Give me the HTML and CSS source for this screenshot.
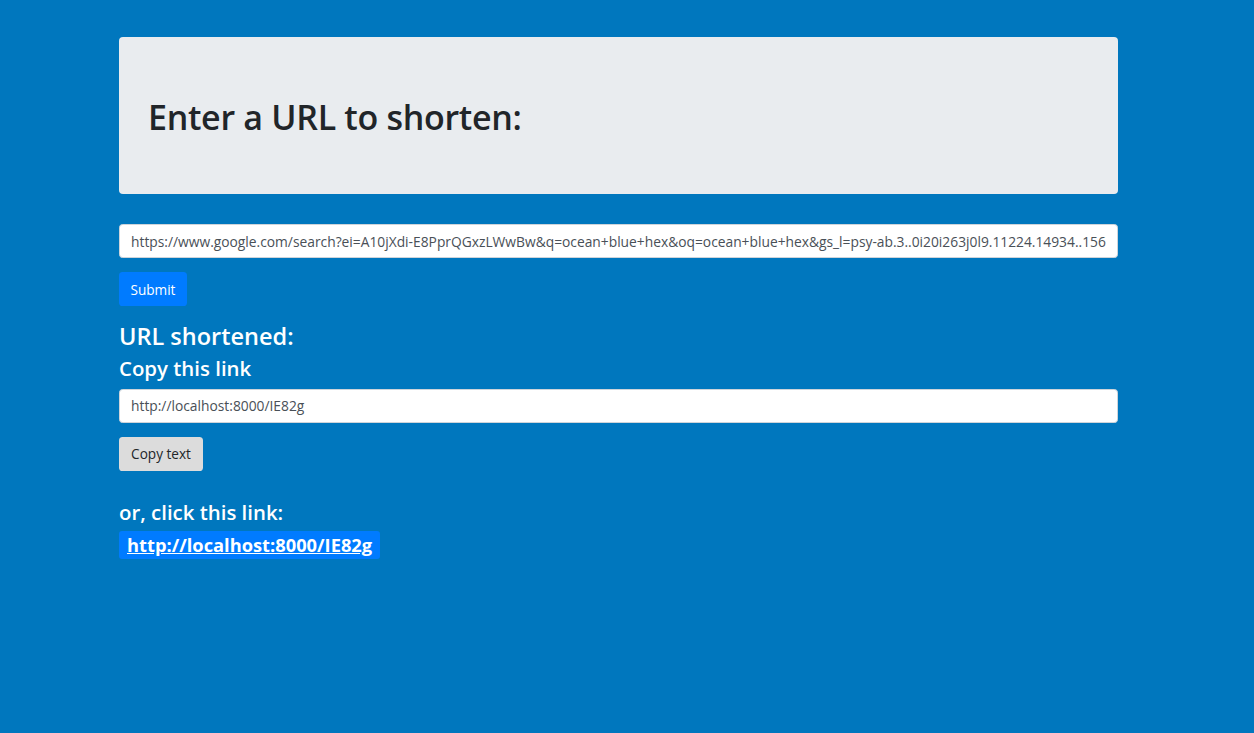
FILE: index.html
```html
<!DOCTYPE html>
<html>
<head>
<meta charset="utf-8">
<link rel="stylesheet" href="styles.css">
</head>
<body>
<main class="container">
  <section class="jumbotron">
    <h1 class="title">Enter a URL to shorten:</h1>
  </section>
  <form class="form">
    <div class="form-group">
      <input class="form-control" type="text" value="https://www.google.com/search?ei=A10jXdi-E8PprQGxzLWwBw&amp;q=ocean+blue+hex&amp;oq=ocean+blue+hex&amp;gs_l=psy-ab.3..0i20i263j0l9.11224.14934..15676...0.0..0.112.1243.13j1......0....1..gws-wiz.......0i71j0i131j0i67j0i10.abcdef">
    </div>
    <button class="btn btn-primary" type="button">Submit</button>
  </form>
  <section class="result">
    <h3 class="h3">URL shortened:</h3>
    <h4 class="h4">Copy this link</h4>
    <div class="form-group">
      <input class="form-control" type="text" value="http://localhost:8000/IE82g">
    </div>
    <button class="btn btn-light" type="button">Copy text</button>
    <h4 class="h4 or">or, click this link:</h4>
    <a class="short-link" href="#">http://localhost:8000/IE82g</a>
  </section>
</main>
</body>
</html>
```
FILE: styles.css
```css
* { box-sizing: border-box; }
html, body { margin: 0; padding: 0; }
body {
  background: #0077be;
  font-family: "Open Sans", "Noto Sans", sans-serif;
  font-size: 14.4px;
  line-height: 1.5;
  color: #212529;
  min-height: 733px;
  padding-right: 17px;
}
.container {
  width: 999px;
  margin: 0 auto;
  padding-top: 37px;
}
.jumbotron {
  background: #e9ecef;
  border-radius: 4px;
  height: 157px;
  padding: 0 29px;
  display: flex;
  align-items: center;
  margin-bottom: 30px;
}
.title {
  margin: 0;
  font-size: 34px;
  font-weight: 600;
  color: #212529;
  letter-spacing: -0.3px;
  padding-top: 4px;
}
.form-group { margin-bottom: 14px; }
.form-control {
  display: block;
  width: 100%;
  height: 34px;
  padding: 0 11px;
  font-family: "Open Sans", "Noto Sans", sans-serif;
  font-size: 13.8px;
  color: #495057;
  background: #fff;
  border: 1px solid #ced4da;
  border-radius: 3.6px;
  outline: none;
}
.btn {
  display: inline-block;
  height: 34px;
  padding: 0 11px;
  font-family: "Open Sans", "Noto Sans", sans-serif;
  font-size: 13.6px;
  border: none;
  border-radius: 3.6px;
  cursor: pointer;
}
.btn-primary { background: #007bff; color: #fff; width: 68px; }
.btn-light { background: #dcdcdc; color: #212529; width: 84px; }
.result { color: #fff; }
.h3 {
  margin: 16px 0 0;
  font-size: 23.5px;
  font-weight: 600;
  line-height: 1.2;
}
.h4 {
  margin: 6px 0 8px;
  font-size: 20.4px;
  font-weight: 600;
  line-height: 1.2;
}
.h4.or { margin: 29px 0 7px; }
.short-link {
  display: inline-block;
  background: #007bff;
  color: #fff;
  font-weight: 700;
  font-size: 18.3px;
  line-height: 28px;
  padding: 0 8px;
  border-radius: 3px;
  text-decoration: underline;
}
```
